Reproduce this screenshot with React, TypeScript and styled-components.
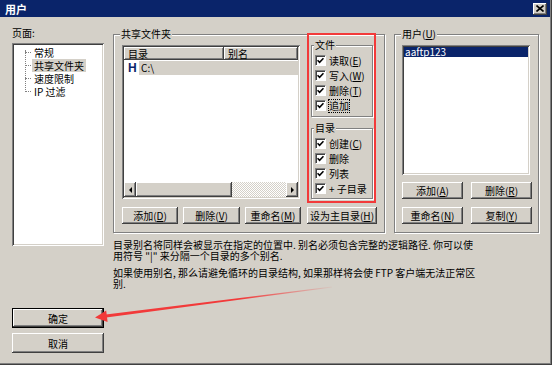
import React from "react";
import styled, { createGlobalStyle, css } from "styled-components";

const GlobalStyle = createGlobalStyle`
  html, body {
    margin: 0;
    padding: 0;
    background: #ffffff;
  }
  body {
    font-family: "Noto Sans CJK SC", "Noto Sans", sans-serif;
    font-size: 10px;
    color: #000000;
  }
  * {
    box-sizing: border-box;
  }
`;

const raised = css`
  box-shadow: inset -1px -1px #404040, inset 1px 1px #ffffff,
    inset -2px -2px #808080, inset 2px 2px #d4d0c8;
`;

const sunken = css`
  box-shadow: inset 1px 1px #808080, inset -1px -1px #ffffff,
    inset 2px 2px #404040, inset -2px -2px #d4d0c8;
`;

const Window = styled.div`
  position: relative;
  width: 552px;
  height: 365px;
  background: #d4d0c8;
  box-shadow: inset -1px -1px #404040, inset -2px -2px #808080;
  display: flex;
  flex-direction: column;
`;

const TitleBar = styled.div`
  height: 17px;
  margin-right: 2px;
  padding: 0 3px 0 5px;
  background: #0a246a;
  color: #ffffff;
  font-size: 11px;
  font-weight: bold;
  display: flex;
  align-items: center;
  justify-content: space-between;
`;

const CloseButton = styled.div`
  width: 14px;
  height: 12px;
  background: #d4d0c8;
  ${raised};
  display: flex;
  align-items: center;
  justify-content: center;
`;

const Body = styled.div`
  display: flex;
  padding: 10px 0 0 12px;
`;

const LeftColumn = styled.div`
  width: 92px;
  display: flex;
  flex-direction: column;
`;

const Label = styled.div`
  height: 12px;
  line-height: 12px;
`;

const Tree = styled.div`
  position: relative;
  margin-top: 4px;
  height: 203px;
  padding: 3px 2px 2px;
  background: #ffffff;
  ${sunken};
  display: flex;
  flex-direction: column;
  &::before {
    content: "";
    position: absolute;
    left: 13px;
    top: 7px;
    height: 40px;
    border-left: 1px dotted #808080;
  }
`;

const TreeItem = styled.div<{ $selected?: boolean }>`
  position: relative;
  align-self: flex-start;
  height: 13px;
  line-height: 13px;
  margin-left: 18px;
  padding: 0 2px;
  background: ${(p) => (p.$selected ? "#d4d0c8" : "transparent")};
  white-space: nowrap;
  &::before {
    content: "";
    position: absolute;
    left: -7px;
    top: 6px;
    width: 6px;
    border-top: 1px dotted #808080;
  }
`;

const Button = styled.div<{ $w?: number; $h?: number; $default?: boolean }>`
  width: ${(p) => (p.$w ? `${p.$w}px` : "100%")};
  height: ${(p) => p.$h ?? 17}px;
  flex: none;
  background: #d4d0c8;
  display: flex;
  align-items: center;
  justify-content: center;
  white-space: nowrap;
  ${(p) =>
    p.$default
      ? css`
          border: 1px solid #000000;
          ${raised};
        `
      : raised};
`;

const DialogButtons = styled.div`
  margin-top: 62px;
  display: flex;
  flex-direction: column;
  gap: 5px;
`;

const RightColumn = styled.div`
  margin-left: 9px;
  width: 426px;
  display: flex;
  flex-direction: column;
`;

const TopRow = styled.div`
  margin-top: 7px;
  display: flex;
  gap: 9px;
`;

const GroupBox = styled.div<{ $w: number; $h: number }>`
  position: relative;
  width: ${(p) => p.$w}px;
  height: ${(p) => p.$h}px;
  border: 1px solid #808080;
  box-shadow: inset 1px 1px #ffffff, 1px 1px #ffffff;
`;

const Legend = styled.span<{ $left?: number }>`
  position: absolute;
  top: -7px;
  left: ${(p) => p.$left ?? 6}px;
  padding: 0 1px;
  line-height: 12px;
  background: #d4d0c8;
  white-space: nowrap;
`;

const SharedGrid = styled.div`
  padding: 10px 0 0 8px;
  display: grid;
  grid-template-columns: 178px 62px;
  grid-template-rows: 154px 17px;
  column-gap: 11px;
  row-gap: 8px;
`;

const ListView = styled.div`
  height: 154px;
  padding: 2px;
  background: #ffffff;
  ${sunken};
  display: flex;
  flex-direction: column;
`;

const HeaderRow = styled.div`
  display: flex;
  height: 13px;
`;

const HeaderCell = styled.div<{ $w?: number }>`
  ${(p) => (p.$w ? `width: ${p.$w}px;` : "flex: 1;")}
  padding-left: 4px;
  line-height: 13px;
  background: #d4d0c8;
  ${raised};
`;

const DirRow = styled.div`
  display: flex;
  height: 14px;
  margin-top: 1px;
`;

const HomeMark = styled.div`
  width: 15px;
  padding-left: 4px;
  font-family: "Liberation Sans", Arial, sans-serif;
  font-size: 12px;
  font-weight: bold;
  line-height: 14px;
  color: #0a246a;
`;

const DirText = styled.div`
  flex: 1;
  padding-left: 2px;
  line-height: 14px;
  background: #d4d0c8;
`;

const Spacer = styled.div`
  flex: 1;
`;

const ScrollBar = styled.div`
  display: flex;
  height: 15px;
`;

const ScrollArrow = styled.div<{ $dir: "left" | "right" }>`
  width: 12px;
  background: #d4d0c8;
  ${raised};
  display: flex;
  align-items: center;
  justify-content: center;
  &::after {
    content: "";
    border-top: 3px solid transparent;
    border-bottom: 3px solid transparent;
    ${(p) =>
      p.$dir === "left"
        ? "border-right: 3px solid #000;"
        : "border-left: 3px solid #000;"}
  }
`;

const ScrollThumb = styled.div`
  width: 96px;
  background: #d4d0c8;
  ${raised};
`;

const ScrollTrack = styled.div`
  flex: 1;
  background: repeating-conic-gradient(#ffffff 0 25%, #d4d0c8 0 50%) 0 0 / 2px 2px;
`;

const Perms = styled.div`
  position: relative;
  display: flex;
  flex-direction: column;
  gap: 11px;
`;

const PermBox = styled(GroupBox)`
  padding: 7px 0 0 3px;
`;

const CheckRow = styled.div`
  height: 15px;
  display: flex;
  align-items: center;
  gap: 3px;
  white-space: nowrap;
`;

const Box = styled.div`
  width: 11px;
  height: 11px;
  flex: none;
  background: #ffffff;
  border: 1px solid #808080;
  border-right-color: #ffffff;
  border-bottom-color: #ffffff;
  box-shadow: inset 1px 1px #404040;
  display: flex;
  align-items: center;
  justify-content: center;
`;

const CheckText = styled.span<{ $focus?: boolean }>`
  display: inline-block;
  height: 12px;
  line-height: 12px;
  ${(p) => p.$focus && "outline: 1px dotted #000000; outline-offset: 0;"}
`;

const Highlight = styled.div`
  position: absolute;
  left: -4px;
  right: -3px;
  top: -12px;
  bottom: -4px;
  border: 2px solid #f23a3a;
  pointer-events: none;
`;

const ButtonRow = styled.div`
  grid-column: 1 / -1;
  display: flex;
  gap: 5px;
`;

const UserInner = styled.div`
  padding: 10px 0 0 7px;
`;

const UserList = styled.div`
  width: 128px;
  height: 130px;
  padding: 2px;
  background: #ffffff;
  ${sunken};
`;

const UserItem = styled.div`
  height: 10px;
  line-height: 10px;
  padding-left: 1px;
  background: #0a246a;
  color: #ffffff;
`;

const UserButtons = styled.div`
  margin-top: 7px;
  display: grid;
  grid-template-columns: 61px 61px;
  column-gap: 8px;
  row-gap: 8px;
`;

const Notes = styled.div`
  margin-top: 6px;
  line-height: 11px;
  white-space: nowrap;
  p {
    margin: 0 0 6px;
  }
`;

const Overlay = styled.svg`
  position: absolute;
  left: 0;
  top: 0;
  pointer-events: none;
`;

const Check = () => (
  <Box>
    <svg width="7" height="7" viewBox="0 0 7 7">
      <path d="M0.5 3.2 L2.6 5.4 L6.5 1.2" fill="none" stroke="#000" strokeWidth="1.6" />
    </svg>
  </Box>
);

const CheckItem = ({ children, focus }: { children: React.ReactNode; focus?: boolean }) => (
  <CheckRow>
    <Check />
    <CheckText $focus={focus}>{children}</CheckText>
  </CheckRow>
);

export default function App() {
  return (
    <>
      <GlobalStyle />
      <Window>
        <TitleBar>
          <span>用户</span>
          <CloseButton>
            <svg width="8" height="7" viewBox="0 0 8 7">
              <path d="M0.5 0.5 L7.5 6.5 M7.5 0.5 L0.5 6.5" stroke="#000" strokeWidth="1.6" />
            </svg>
          </CloseButton>
        </TitleBar>
        <Body>
          <LeftColumn>
            <Label>页面:</Label>
            <Tree>
              <TreeItem>常规</TreeItem>
              <TreeItem $selected>共享文件夹</TreeItem>
              <TreeItem>速度限制</TreeItem>
              <TreeItem>IP 过滤</TreeItem>
            </Tree>
            <DialogButtons>
              <Button $h={20} $default>确定</Button>
              <Button $h={20}>取消</Button>
            </DialogButtons>
          </LeftColumn>
          <RightColumn>
            <TopRow>
              <GroupBox $w={272} $h={199}>
                <Legend>共享文件夹</Legend>
                <SharedGrid>
                  <ListView>
                    <HeaderRow>
                      <HeaderCell $w={100}>目录</HeaderCell>
                      <HeaderCell>别名</HeaderCell>
                    </HeaderRow>
                    <DirRow>
                      <HomeMark>H</HomeMark>
                      <DirText>C:\</DirText>
                    </DirRow>
                    <Spacer />
                    <ScrollBar>
                      <ScrollArrow $dir="left" />
                      <ScrollThumb />
                      <ScrollTrack />
                      <ScrollArrow $dir="right" />
                    </ScrollBar>
                  </ListView>
                  <Perms>
                    <PermBox $w={62} $h={72}>
                      <Legend $left={2}>文件</Legend>
                      <CheckItem>读取(<u>E</u>)</CheckItem>
                      <CheckItem>写入(<u>W</u>)</CheckItem>
                      <CheckItem>删除(<u>T</u>)</CheckItem>
                      <CheckItem focus>追加</CheckItem>
                    </PermBox>
                    <PermBox $w={62} $h={71}>
                      <Legend $left={2}>目录</Legend>
                      <CheckItem>创建(<u>C</u>)</CheckItem>
                      <CheckItem>删除</CheckItem>
                      <CheckItem>列表</CheckItem>
                      <CheckItem>+ 子目录</CheckItem>
                    </PermBox>
                    <Highlight />
                  </Perms>
                  <ButtonRow>
                    <Button $w={56}><span>添加(<u>D</u>)</span></Button>
                    <Button $w={57}><span>删除(<u>V</u>)</span></Button>
                    <Button $w={56}><span>重命名(<u>M</u>)</span></Button>
                    <Button $w={70} style={{ marginLeft: 1 }}>
                      <span>设为主目录(<u>H</u>)</span>
                    </Button>
                  </ButtonRow>
                </SharedGrid>
              </GroupBox>
              <GroupBox $w={145} $h={199}>
                <Legend>用户(<u>U</u>)</Legend>
                <UserInner>
                  <UserList>
                    <UserItem>aaftp123</UserItem>
                  </UserList>
                  <UserButtons>
                    <Button><span>添加(<u>A</u>)</span></Button>
                    <Button><span>删除(<u>R</u>)</span></Button>
                    <Button><span>重命名(<u>N</u>)</span></Button>
                    <Button><span>复制(<u>Y</u>)</span></Button>
                  </UserButtons>
                </UserInner>
              </GroupBox>
            </TopRow>
            <Notes>
              <p>
                目录别名将同样会被显示在指定的位置中. 别名必须包含完整的逻辑路径. 你可以使
                <br />
                用符号 "|" 来分隔一个目录的多个别名.
              </p>
              <p>
                如果使用别名, 那么请避免循环的目录结构, 如果那样将会使 FTP 客户端无法正常区
                <br />
                别.
              </p>
            </Notes>
          </RightColumn>
        </Body>
        <Overlay width="552" height="365" viewBox="0 0 552 365">
          <defs>
            <linearGradient id="fade" gradientUnits="userSpaceOnUse" x1="332" y1="287" x2="240" y2="299">
              <stop offset="0" stopColor="#f23a3a" stopOpacity="0.05" />
              <stop offset="1" stopColor="#f23a3a" stopOpacity="1" />
            </linearGradient>
          </defs>
          <polygon points="332,286.6 332,287.4 106.2,317.6 105.8,314.4" fill="url(#fade)" />
          <polygon points="95,317.5 107.6,322 106.2,310.5" fill="#f23a3a" />
        </Overlay>
      </Window>
    </>
  );
}
